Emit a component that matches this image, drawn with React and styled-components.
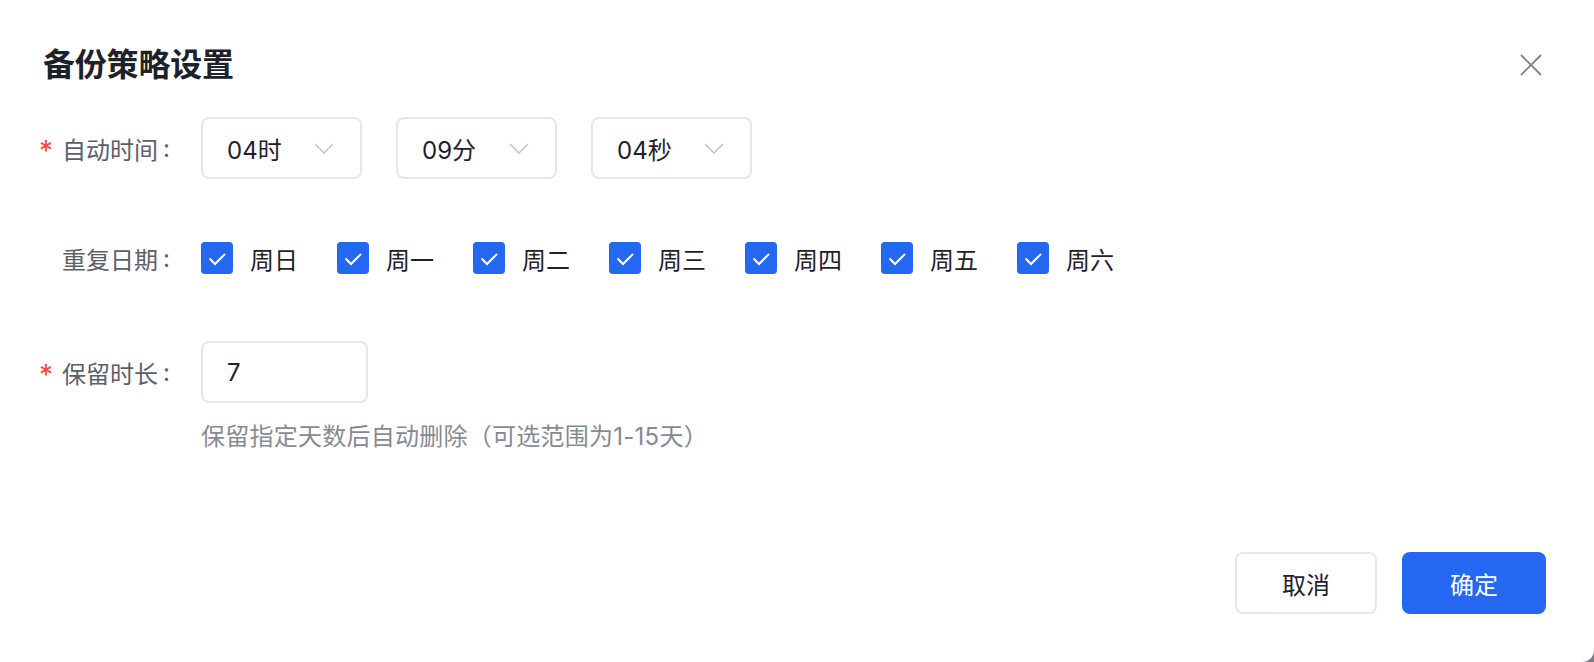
import React, { useState } from "react";
import styled, { createGlobalStyle } from "styled-components";

const Global = createGlobalStyle`
  html, body { margin: 0; padding: 0; background: #7d7e82; }
  body { font-family: Inter, "Noto Sans CJK SC", sans-serif; }
  * { box-sizing: border-box; }
`;

const Dialog = styled.div`
  width: 1594px;
  height: 662px;
  background: #ffffff;
  border-bottom-right-radius: 12px;
  display: flex;
  flex-direction: column;
  padding: 40px 48px 48px 43px;
`;

const Header = styled.div`
  display: flex;
  align-items: center;
  justify-content: space-between;
  height: 50px;
`;

const Title = styled.h1`
  margin: 0;
  font-size: 32px;
  font-weight: 600;
  color: #1d2129;
  line-height: 50px;
  letter-spacing: -0.2px;
`;

const CloseButton = styled.button`
  width: 30px;
  height: 30px;
  border: none;
  background: transparent;
  padding: 0;
  display: flex;
  align-items: center;
  justify-content: center;
  cursor: pointer;
  color: #7f8189;
`;

const Form = styled.div`
  display: flex;
  flex-direction: column;
  margin-top: 27px;
`;

const FormItem = styled.div`
  display: flex;
  align-items: flex-start;
  margin-bottom: ${(p) => p.$mb || 0}px;
`;

const Label = styled.div`
  width: 158px;
  height: 62px;
  flex-shrink: 0;
  display: flex;
  align-items: center;
  justify-content: flex-end;
  padding-right: 31px;
  font-size: 24px;
  color: #5c6068;
  white-space: nowrap;
`;

const Star = styled.span`
  color: #f54a45;
  font-size: 28px;
  margin-right: 9px;
  position: relative;
  top: 3px;
`;

const Colon = styled.span`
  margin-left: 5px;
`;

const Control = styled.div`
  display: flex;
  flex-direction: column;
`;

const SelectRow = styled.div`
  display: flex;
  gap: 34px;
`;

const SelectBox = styled.div`
  width: 161px;
  height: 62px;
  border: 2px solid #e6e7ea;
  border-radius: 8px;
  display: flex;
  align-items: center;
  justify-content: space-between;
  padding: 0 26px 0 24px;
  font-size: 24px;
  color: #1d2129;
  background: #fff;
`;

const CheckGroup = styled.div`
  display: flex;
  align-items: center;
  height: 62px;
  gap: 39px;
`;

const CheckItem = styled.label`
  display: flex;
  align-items: center;
  gap: 17px;
  font-size: 24px;
  color: #1d2129;
  cursor: pointer;
`;

const CheckBox = styled.span`
  width: 32px;
  height: 32px;
  border-radius: 4px;
  background: ${(p) => (p.$checked ? "#2468f2" : "#fff")};
  border: ${(p) => (p.$checked ? "none" : "2px solid #e6e7ea")};
  display: flex;
  align-items: center;
  justify-content: center;
`;

const Input = styled.input`
  width: 167px;
  height: 62px;
  border: 2px solid #e6e7ea;
  border-radius: 8px;
  padding: 0 24px;
  font-size: 24px;
  font-family: inherit;
  color: #1d2129;
  outline: none;
`;

const Hint = styled.div`
  margin-top: 18px;
  font-size: 24px;
  line-height: 32px;
  color: #868a92;
  letter-spacing: 0.25px;
`;

const Footer = styled.div`
  margin-top: auto;
  display: flex;
  justify-content: flex-end;
  gap: 25px;
`;

const Button = styled.button`
  width: ${(p) => (p.$primary ? 144 : 142)}px;
  height: 62px;
  border-radius: 8px;
  font-size: 24px;
  font-family: inherit;
  cursor: pointer;
  border: ${(p) => (p.$primary ? "none" : "2px solid #e6e7ea")};
  background: ${(p) => (p.$primary ? "#2468f2" : "#fff")};
  color: ${(p) => (p.$primary ? "#fff" : "#1d2129")};
`;

const Chevron = () => (
  <svg width="20" height="11" viewBox="0 0 20 11" fill="none">
    <path d="M1 1l9 9 9-9" stroke="#c2c5cc" strokeWidth="1.6" />
  </svg>
);

const CheckMark = () => (
  <svg width="32" height="32" viewBox="0 0 32 32" fill="none">
    <path d="M8.5 16.5l5.5 5.5 10-10" stroke="#fff" strokeWidth="2" />
  </svg>
);

const days = ["周日", "周一", "周二", "周三", "周四", "周五", "周六"];

export default function App() {
  const [checked] = useState(days.map(() => true));
  return (
    <>
      <Global />
      <Dialog>
        <Header>
          <Title>备份策略设置</Title>
          <CloseButton aria-label="close">
            <svg width="22" height="22" viewBox="0 0 22 22" fill="none">
              <path d="M1 1l20 20M21 1L1 21" stroke="currentColor" strokeWidth="1.8" />
            </svg>
          </CloseButton>
        </Header>
        <Form>
          <FormItem $mb={48}>
            <Label>
              <Star>*</Star>自动时间<Colon>:</Colon>
            </Label>
            <SelectRow>
              <SelectBox>
                <span>04时</span>
                <Chevron />
              </SelectBox>
              <SelectBox>
                <span>09分</span>
                <Chevron />
              </SelectBox>
              <SelectBox>
                <span>04秒</span>
                <Chevron />
              </SelectBox>
            </SelectRow>
          </FormItem>
          <FormItem $mb={52}>
            <Label>
              重复日期<Colon>:</Colon>
            </Label>
            <CheckGroup>
              {days.map((d, i) => (
                <CheckItem key={d}>
                  <CheckBox $checked={checked[i]}>{checked[i] && <CheckMark />}</CheckBox>
                  {d}
                </CheckItem>
              ))}
            </CheckGroup>
          </FormItem>
          <FormItem>
            <Label>
              <Star>*</Star>保留时长<Colon>:</Colon>
            </Label>
            <Control>
              <Input defaultValue="7" />
              <Hint>保留指定天数后自动删除（可选范围为1-15天）</Hint>
            </Control>
          </FormItem>
        </Form>
        <Footer>
          <Button>取消</Button>
          <Button $primary>确定</Button>
        </Footer>
      </Dialog>
    </>
  );
}
